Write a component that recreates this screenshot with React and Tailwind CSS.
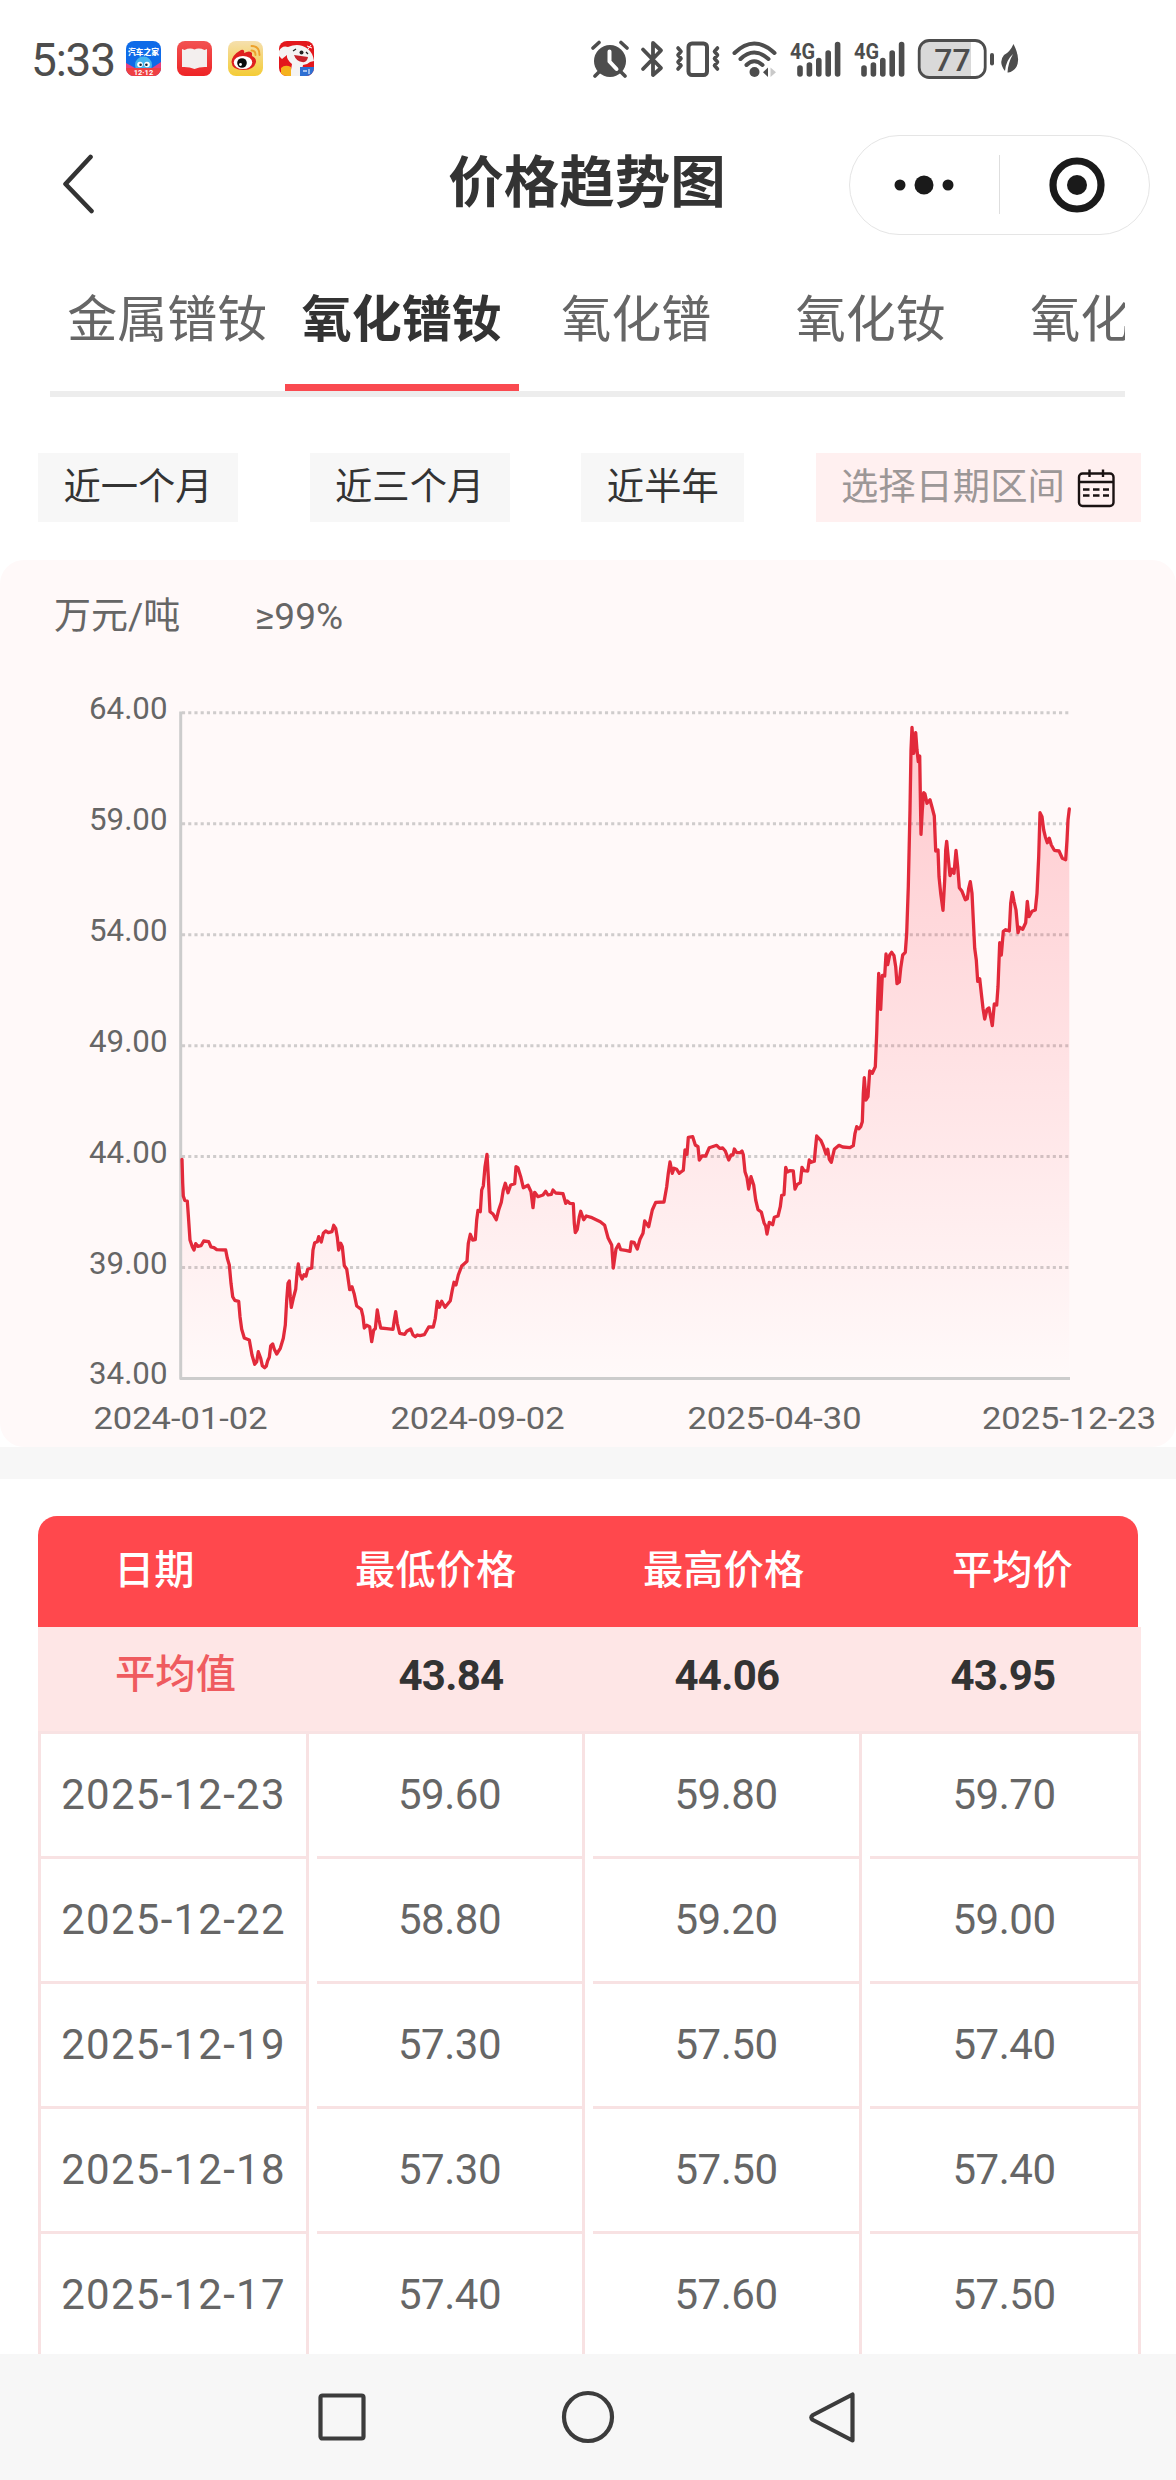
import React from 'react';

const tabs = ['金属镨钕', '氧化镨钕', '氧化镨', '氧化钕', '氧化镝'];
const activeTab = 1;

const rows = [
    ['2025-12-23', '59.60', '59.80', '59.70'],
    ['2025-12-22', '58.80', '59.20', '59.00'],
    ['2025-12-19', '57.30', '57.50', '57.40'],
    ['2025-12-18', '57.30', '57.50', '57.40'],
    ['2025-12-17', '57.40', '57.60', '57.50'],
];

// Curva por tramos: origen en px y puntos en tercios de px
const segments = [
    {
        x: 160, y: 1100,
        pts: [[66, 178], [68, 250], [70, 288], [74, 301], [82, 303], [85, 345], [90, 420], [97, 440], [102, 450], [107, 431], [114, 439], [123, 437], [131, 423], [146, 425], [153, 441], [162, 443], [170, 449], [197, 450], [202, 475], [208, 495], [213, 550], [218, 590], [224, 601], [236, 604], [240, 650], [245, 688], [253, 714], [268, 720], [276, 765], [284, 793], [290, 785], [295, 755], [302, 775], [307, 797], [314, 803], [319, 798], [323, 782], [328, 772], [332, 738], [338, 732], [343, 748], [350, 762], [361, 745], [370, 715], [376, 675], [380, 600], [384, 550], [388, 543], [391, 590], [394, 622], [400, 595], [407, 568], [411, 520], [415, 492], [419, 520], [426, 537], [432, 524], [438, 528], [443, 508], [455, 504], [459, 450], [464, 428], [472, 425], [476, 410], [484, 426], [490, 400], [497, 393], [505, 398], [516, 395], [521, 376], [527, 385], [532, 412], [536, 450], [542, 430], [547, 440], [553, 497], [560, 507], [565, 540], [569, 569], [576, 560], [583, 583], [590, 618], [604, 628], [609, 650], [613, 684], [620, 676], [629, 680], [635, 725], [641, 690], [646, 686], [652, 630], [657, 660], [662, 684], [680, 686], [699, 688], [703, 660], [707, 635], [712, 670], [719, 700], [734, 703], [740, 694], [752, 687], [759, 705], [766, 710], [772, 705], [780, 707], [793, 704], [806, 681], [820, 681], [826, 655], [832, 604], [838, 622], [845, 604], [855, 622], [871, 602], [877, 570], [882, 547], [888, 555], [895, 525], [905, 498]],
    },
    {
        x: 460, y: 1080,
        pts: [[12, 552], [21, 544], [25, 490], [31, 463], [38, 480], [46, 479], [50, 420], [54, 391], [61, 395], [65, 330], [70, 318], [75, 260], [81, 223], [85, 290], [90, 395], [99, 402], [109, 419], [116, 390], [124, 367], [130, 330], [136, 310], [144, 338], [152, 315], [164, 311], [168, 260], [174, 264], [182, 290], [190, 323], [204, 316], [213, 335], [219, 383], [224, 337], [234, 350], [249, 345], [257, 334], [264, 345], [274, 343], [279, 330], [287, 339], [309, 341], [317, 370], [322, 363], [329, 370], [340, 371], [343, 430], [346, 458], [352, 448], [358, 410], [362, 394], [371, 419], [379, 408], [396, 413], [421, 425], [434, 436], [444, 473], [455, 495], [460, 564], [468, 507], [476, 493], [482, 509], [497, 511], [510, 514], [514, 486], [522, 487], [532, 507], [540, 478], [549, 460], [554, 423], [566, 440], [577, 390], [587, 367], [612, 366], [620, 320], [625, 280], [630, 246], [637, 280], [642, 265], [650, 268], [658, 280], [670, 271], [675, 210], [681, 223], [685, 172], [698, 170], [706, 195], [714, 200], [718, 240], [726, 228], [737, 228], [748, 203], [770, 196], [779, 205], [788, 204], [796, 213], [806, 240], [813, 225], [819, 225], [823, 207], [830, 218], [840, 218]],
    },
    {
        x: 740, y: 1100,
        pts: [[6, 153], [10, 164], [15, 215], [21, 233], [26, 267], [33, 230], [41, 255], [47, 300], [54, 329], [64, 336], [72, 368], [77, 378], [81, 402], [88, 367], [98, 374], [103, 352], [114, 348], [121, 320], [125, 286], [132, 284], [137, 202], [142, 216], [149, 212], [160, 213], [165, 267], [171, 254], [181, 248], [186, 202], [192, 212], [203, 213], [208, 180], [214, 187], [223, 184], [226, 150], [230, 108], [243, 122], [250, 138], [258, 162], [263, 148], [268, 178], [274, 187], [283, 148], [297, 136], [308, 141], [330, 143], [340, 137], [345, 100], [350, 80], [357, 86]],
    },
    {
        x: 740, y: 700,
        pts: [[362, 1280], [367, 1265], [370, 1180], [373, 1133], [378, 1200], [384, 1190], [389, 1113], [397, 1120], [406, 1100], [410, 1000], [413, 900], [416, 820], [422, 928], [427, 826], [434, 828], [438, 762], [443, 794], [449, 765], [455, 757], [462, 767], [467, 800], [471, 851], [478, 846], [482, 805], [488, 765], [496, 757], [500, 700], [505, 560], [510, 330], [513, 150], [516, 82], [521, 160], [527, 98], [531, 150], [535, 185], [539, 168], [541, 280], [543, 403], [547, 330], [551, 278], [555, 282], [561, 310], [570, 299], [577, 325], [583, 348], [587, 453], [594, 450], [597, 530], [602, 580], [609, 631], [614, 540], [617, 450], [620, 424], [625, 475], [630, 527], [636, 508], [642, 520], [648, 451], [653, 500], [658, 563], [666, 574], [676, 599], [682, 596], [686, 565], [691, 545], [696, 580], [700, 660], [704, 745], [709, 780], [713, 844], [719, 836], [724, 880], [729, 925], [734, 957], [741, 928], [747, 924], [757, 977], [763, 912], [770, 915], [774, 860], [779, 728], [784, 765], [790, 694], [797, 689], [808, 693], [812, 610], [817, 577], [822, 604], [828, 630], [834, 698], [839, 682], [848, 688], [857, 668], [862, 604], [867, 650], [876, 634], [886, 630], [891, 580], [896, 470], [900, 338], [906, 350], [911, 390], [916, 410], [922, 428], [928, 415], [934, 435], [943, 451], [957, 453], [967, 475], [977, 479], [981, 420], [984, 360], [988, 327]],
    },
];

const points = segments.flatMap(s => s.pts.map(([px, py]) => [s.x + px / 3, s.y + py / 3]));
const linePath = points.map(([x, y], i) => `${i ? 'L' : 'M'}${x.toFixed(1)} ${y.toFixed(1)}`).join('');
const areaPath = `${linePath}L1069.3 1377L182 1377Z`;

const yLabels = ['64.00', '59.00', '54.00', '49.00', '44.00', '39.00', '34.00'];
const xLabels = [
    { x: 180.5, text: '2024-01-02' },
    { x: 477.5, text: '2024-09-02' },
    { x: 774.5, text: '2025-04-30' },
    { x: 1069, text: '2025-12-23' },
];

function AppIcons() {
    return (
        <div className="flex gap-4">
            <svg width="35" height="35" viewBox="0 0 35 35">
                <clipPath id="appClip"><rect width="35" height="35" rx="8" /></clipPath>
                <g clipPath="url(#appClip)">
                    <rect width="35" height="35" fill="#0f6be8" />
                    <path d="M0 22L9 27H26L35 21V35H0Z" fill="#e8407e" />
                    <circle cx="17.5" cy="24" r="8.5" fill="#45b4ee" />
                    <circle cx="14" cy="23.5" r="2.8" fill="#fff" />
                    <circle cx="21" cy="23.5" r="2.8" fill="#fff" />
                    <circle cx="14.6" cy="23.8" r="1.3" fill="#123" />
                    <circle cx="20.4" cy="23.8" r="1.3" fill="#123" />
                    <rect y="27" width="35" height="8" fill="#ef4043" />
                </g>
                <text x="17.5" y="14.2" textAnchor="middle" fontSize="7.7" fontWeight="900" fill="#fff">汽车之家</text>
                <text x="17.5" y="33.8" textAnchor="middle" fontSize="7.5" fontWeight="700" fill="#fff">12·12</text>
            </svg>
            <svg width="35" height="35" viewBox="0 0 35 35">
                <linearGradient id="bookBg" x1="0" y1="0" x2="0" y2="1">
                    <stop offset="0" stopColor="#f25252" />
                    <stop offset="1" stopColor="#ee2426" />
                </linearGradient>
                <rect width="35" height="35" rx="8" fill="url(#bookBg)" />
                <path d="M5 8L7.500 9Q13 6.500 17.500 8.500Q22 6.500 27.500 9L30 8V26Q23 25.500 17.500 28Q12 25.500 5 26Z" fill="#f3efee" />
            </svg>
            <svg width="35" height="35" viewBox="0 0 35 35">
                <linearGradient id="weiboBg" x1="0" y1="0" x2="0" y2="1">
                    <stop offset="0" stopColor="#f5dfae" />
                    <stop offset="1" stopColor="#f4cc35" />
                </linearGradient>
                <rect width="35" height="35" rx="8" fill="url(#weiboBg)" />
                <path d="M13 9Q17 8 16 12Q22 9 24 12L24 15Q28.500 17 28 21Q26 29 15.500 29Q4 29 3.500 21Q4 14 13 9Z" fill="#df1f20" />
                <ellipse cx="15" cy="21.500" rx="9.200" ry="6.600" fill="#fff" />
                <circle cx="14" cy="22" r="4.800" fill="#0b0b0b" />
                <circle cx="12.500" cy="23.500" r="1.400" fill="#fff" />
                <path d="M23.500 5Q31.500 5 31.500 14M23.500 9.500Q27.500 9.500 27.500 14" fill="none" stroke="#eda02c" strokeWidth="1.900" strokeLinecap="round" />
            </svg>
            <svg width="35" height="35" viewBox="0 0 35 35">
                <g clipPath="url(#appClip)">
                    <rect width="35" height="35" fill="#e3171c" />
                    <path d="M0 10Q3 4 9 6Q20 1 29 8Q34 12 35 20L31 21Q28 24 24 24L22 35H11L13 23Q7 18 8 14L3 18L0 15Z" fill="#f4f3f3" />
                    <path d="M15 14L29 16Q28 22 23 21Q17 20 15 14Z" fill="#c6222a" />
                    <circle cx="22.500" cy="11.500" r="2" fill="#222" />
                    <path d="M14 10L17 8M27 11L29 13" stroke="#222" strokeWidth="1.300" />
                    <path d="M28 5L33 7M32 4L29 8" stroke="#fff" strokeWidth="1" />
                    <path d="M2 27Q6 23 12 26V35H2Z" fill="#f5b21d" />
                    <rect x="21" y="26" width="14" height="9" fill="#2d6fd3" />
                    <path d="M24 30H28M30 28V33" stroke="#cde0fb" strokeWidth="1.300" />
                </g>
            </svg>
        </div>
    );
}

function Signal() {
    return (
        <svg className="overflow-visible" width="52" height="36" viewBox="0 0 52 36">
            <text x="0" y="17.500" fontSize="22" fontWeight="700" fill="#4d4d4d" fontFamily="Roboto, sans-serif" textLength="25" lengthAdjust="spacingAndGlyphs">4G</text>
            <g stroke="#4d4d4d" strokeWidth="5.600" strokeLinecap="round">
                <path d="M10 27V33M19.400 24V33M28.800 19.500V33M38.200 12V33M47.600 3.500V33" />
            </g>
        </svg>
    );
}

function StatusIcons() {
    return (
        <div className="flex items-center">
            {/* Alarma */}
            <svg width="38" height="38" viewBox="0 0 38 38">
                <circle cx="19" cy="21" r="16" fill="#4d4d4d" />
                <path d="M2 8L8 2.500M36 8L30 2.500M8 32L4 36M30 32L34 36" stroke="#4d4d4d" strokeWidth="3.600" strokeLinecap="round" />
                <path d="M18.500 11.500V21.500L25.500 29" fill="none" stroke="#fff" strokeWidth="4" strokeLinecap="round" strokeLinejoin="round" />
            </svg>
            {/* Bluetooth */}
            <svg className="ml-[11px]" width="24" height="38" viewBox="0 0 24 38">
                <path d="M3 9.500L21 28L13 35V3L21 10.500L3 29" fill="none" stroke="#4d4d4d" strokeWidth="3.800" strokeLinecap="round" strokeLinejoin="round" />
            </svg>
            {/* Vibración */}
            <svg className="ml-[11px]" width="46" height="38" viewBox="0 0 46 38">
                <rect x="13.500" y="3.500" width="18.500" height="31.500" rx="3.500" fill="none" stroke="#4d4d4d" strokeWidth="4" />
                <path d="M3 8L6 11.500L3 15L6 18.500L3 22L6 25.500L3 29M42.500 8L39.500 11.500L42.500 15L39.500 18.500L42.500 22L39.500 25.500L42.500 29" fill="none" stroke="#4d4d4d" strokeWidth="3.600" strokeLinecap="round" strokeLinejoin="round" />
            </svg>
            {/* Wifi */}
            <svg className="ml-[10px]" width="48" height="38" viewBox="0 0 48 38">
                <g fill="none" stroke="#4d4d4d" strokeWidth="4" strokeLinecap="round">
                    <path d="M3.500 13Q23 -6 43.500 13M9.500 19Q23 6 37.500 19M15.500 25Q23 17.500 31.500 25" />
                </g>
                <circle cx="23.500" cy="32" r="5" fill="#4d4d4d" />
                <path d="M37 27.500V37L32 32.300Z" fill="#4d4d4d" />
                <path d="M39.500 27.500V37L45 32.300Z" fill="#c9c9c9" />
            </svg>
            <div className="ml-[11px] flex gap-[12px]">
                <Signal />
                <Signal />
            </div>
            {/* Batería */}
            <svg className="ml-[11px]" width="78" height="40" viewBox="0 0 78 40">
                <path d="M12 2H54V38H12Q3 38 3 29V11Q3 2 12 2Z" fill="#d9d9d9" />
                <rect x="2.200" y="1.500" width="66" height="37" rx="10" fill="none" stroke="#4d4d4d" strokeWidth="2.800" />
                <path d="M75 16V24.500" stroke="#4d4d4d" strokeWidth="4" strokeLinecap="round" />
                <text x="35.500" y="32" textAnchor="middle" fontSize="32" fontWeight="500" fontFamily="Roboto, sans-serif" fill="#4d4d4d">77</text>
            </svg>
            {/* Ahorro de energía */}
            <svg className="ml-[5px]" width="20" height="32" viewBox="0 0 20 32">
                <path d="M13.500 1Q23 20 13 27.500Q10 30 7.500 29.500Q8 20 13 11Q6 17 5 28Q-2 19 4 12Q10 9 13.500 1Z" fill="#4d4d4d" />
            </svg>
        </div>
    );
}

function PriceChart() {
    return (
        <svg className="block" width="1176" height="787" viewBox="0 660 1176 787" fontFamily="Roboto, sans-serif" fill="#666">
            <defs>
                <linearGradient id="areaFill" x1="0" y1="0" x2="0" y2="1">
                    <stop offset="0" stopColor="#ff2337" stopOpacity="0.220" />
                    <stop offset="1" stopColor="#ff2337" stopOpacity="0" />
                </linearGradient>
            </defs>
            {yLabels.map((label, i) => (
                <g key={label}>
                    <text x="167.500" y={719 + i * 110.9} textAnchor="end" fontSize="32" textLength="78.500" lengthAdjust="spacingAndGlyphs">{label}</text>
                    {i < 6 && (
                        <path d={`M182 ${712.8 + i * 110.95}H1070`} stroke="#cfcccc" strokeWidth="3" strokeDasharray="3.1 3.12" />
                    )}
                </g>
            ))}
            <path d={areaPath} fill="url(#areaFill)" />
            <path d="M180.700 711.500V1378.400H1070" fill="none" stroke="#ccc" strokeWidth="3" strokeLinejoin="round" />
            <path d={linePath} fill="none" stroke="#e22a3b" strokeWidth="3.300" strokeLinejoin="round" strokeLinecap="round" />
            {xLabels.map(({ x, text }) => (
                <text key={text} x={x} y="1429" textAnchor="middle" fontSize="32" textLength="174" lengthAdjust="spacingAndGlyphs">{text}</text>
            ))}
        </svg>
    );
}

function TableRow({ row }) {
    return (
        <div className="flex h-[125px] shrink-0 text-center text-[42px] leading-[121px] tracking-[-0.5px] text-[#666]">
            <div className="w-[271px] border-x-3 border-b-3 border-[#f8e2e3] tracking-[1.25px]">{row[0]}</div>
            {/* La línea inferior empieza 8px después de la columna */}
            <div className="ml-2 w-[268px] border-r-3 border-b-3 border-[#f8e2e3]">{row[1]}</div>
            <div className="ml-2 w-[269px] border-r-3 border-b-3 border-[#f8e2e3]">{row[2]}</div>
            <div className="ml-2 w-[271px] border-r-3 border-b-3 border-[#f8e2e3]">{row[3]}</div>
        </div>
    );
}

export default function App() {
    return (
        <div className="flex h-[2480px] w-[1176px] flex-col overflow-hidden bg-white font-[Roboto,'Noto_Sans_CJK_SC',sans-serif] text-[#333]">
            {/* Barra de estado */}
            <div className="flex h-[117px] shrink-0 items-center pl-[31px]">
                <span className="w-[95px] pt-[2px] text-[46px] leading-none tracking-[-1.2px] text-[#4d4d4d]">5:33</span>
                <AppIcons />
                <div className="ml-[277px]">
                    <StatusIcons />
                </div>
            </div>

            {/* Cabecera */}
            <div className="flex h-[135px] shrink-0 items-center justify-between pr-[26px] pl-[61px]">
                <svg className="w-[301px]" width="301" height="62" viewBox="0 0 301 62">
                    <path d="M29.500 3L4.500 30L30.500 57" fill="none" stroke="#333" strokeWidth="4.600" strokeLinecap="round" strokeLinejoin="round" />
                </svg>
                <h1 className="-mt-[2px] mr-[37px] text-[55.5px] leading-none font-bold">价格趋势图</h1>
                <div className="flex h-[100px] w-[301px] items-center rounded-full border border-[#e5e5e5]">
                    <svg width="149" height="60" viewBox="0 0 149 60" fill="#1a1a1a">
                        <circle cx="50" cy="30" r="5.500" />
                        <circle cx="74" cy="30" r="9.500" />
                        <circle cx="98" cy="30" r="5.500" />
                    </svg>
                    <div className="h-[59px] w-px bg-[#dedede]"></div>
                    <svg width="149" height="60" viewBox="0 0 149 60">
                        <circle cx="77" cy="30" r="24" fill="none" stroke="#1a1a1a" strokeWidth="7.200" />
                        <circle cx="77" cy="30" r="10" fill="#1a1a1a" />
                    </svg>
                </div>
            </div>

            {/* Pestañas */}
            <div className="mx-[50px] flex h-[145px] w-[1075px] shrink-0 overflow-hidden border-b-6 border-[#ededed]">
                {tabs.map((tab, i) => (
                    <div
                        key={tab}
                        className={`w-[234.5px] shrink-0 border-b-7 text-center text-[50px] leading-[137px] whitespace-nowrap ${i === activeTab ? 'border-[#fa4a50] font-bold text-[#333]' : 'border-transparent text-[#666]'}`}
                    >
                        {tab}
                    </div>
                ))}
            </div>

            {/* Filtros de fecha */}
            <div className="mt-[56px] flex shrink-0 justify-between pr-[35px] pl-[38px] text-[37.3px] leading-[68px]">
                <div className="h-[69px] w-[200px] bg-[#f7f7f7] text-center">近一个月</div>
                <div className="h-[69px] w-[200px] bg-[#f7f7f7] text-center">近三个月</div>
                <div className="h-[69px] w-[163px] bg-[#f7f7f7] text-center">近半年</div>
                <div className="flex h-[69px] w-[325px] items-center bg-[#fff0f0] pl-[25px] text-[#9c9797]">
                    <span className="-mt-px">选择日期区间</span>
                    <svg className="ml-[11px]" width="40" height="40" viewBox="0 0 40 40" fill="none" stroke="#1a1212" strokeWidth="2.400">
                        <rect x="3" y="5.500" width="34.500" height="32.500" rx="3.500" />
                        <path d="M3 14H37.500M13.500 1.500V9M27 1.500V9" />
                        <path d="M7 21.500H13.500M17 21.500H23.500M27 21.500H33M7 27.500H13.500M17 27.500H23.500M27 27.500H33" strokeWidth="2.600" />
                    </svg>
                </div>
            </div>

            {/* Gráfico */}
            <div className="mt-[38px] h-[887px] shrink-0 rounded-[24px] bg-[#fff9f9]">
                <div className="flex h-[100px] pl-[54px] text-[37px] leading-[113px] text-[#666]">
                    <span className="w-[201px]">万元/吨</span>
                    <span>≥99%</span>
                </div>
                <PriceChart />
            </div>
            <div className="h-[32px] shrink-0 bg-[#f7f7f7]"></div>

            {/* Tabla de precios */}
            <div className="mt-[37px] ml-[38px] h-[838px] w-[1103px] shrink-0 overflow-hidden">
                <div className="flex h-[111px] w-[1100px] rounded-t-[19px] bg-[#ff484d] pl-[76px] text-[40.3px] leading-[109px] font-medium text-white">
                    <span className="w-[241px]">日期</span>
                    <span className="w-[288px]">最低价格</span>
                    <span className="w-[309px]">最高价格</span>
                    <span>平均价</span>
                </div>
                <div className="flex h-[107px] border-b-3 border-[#f8e2e3] bg-[#fee6e6] text-center text-[42px] leading-[98px] font-bold">
                    <span className="w-[275px] text-[40.3px] leading-[96px] font-medium text-[#ef5b5f]">平均值</span>
                    <span className="w-[276px] tracking-[-0.7px]">43.84</span>
                    <span className="w-[276px] tracking-[-0.7px]">44.06</span>
                    <span className="w-[276px] tracking-[-0.7px]">43.95</span>
                </div>
                {rows.map(row => (
                    <TableRow key={row[0]} row={row} />
                ))}
            </div>

            {/* Navegación del sistema */}
            <div className="flex h-[126px] shrink-0 items-center justify-center gap-[186px] bg-[#f7f7f7]">
                <svg width="60" height="60" viewBox="0 0 60 60" fill="none" stroke="#3c3c3c" strokeWidth="4.200" strokeLinejoin="round">
                    <rect x="8.500" y="8.500" width="43" height="43" rx="2" />
                </svg>
                <svg width="60" height="60" viewBox="0 0 60 60" fill="none" stroke="#3c3c3c" strokeWidth="4.200">
                    <circle cx="30" cy="30" r="24" />
                </svg>
                <svg width="60" height="60" viewBox="0 0 60 60" fill="none" stroke="#3c3c3c" strokeWidth="4.200" strokeLinejoin="round">
                    <path d="M48.500 7.500V53.500L9 33Q5.500 30.500 9 28Z" />
                </svg>
            </div>
        </div>
    );
}
